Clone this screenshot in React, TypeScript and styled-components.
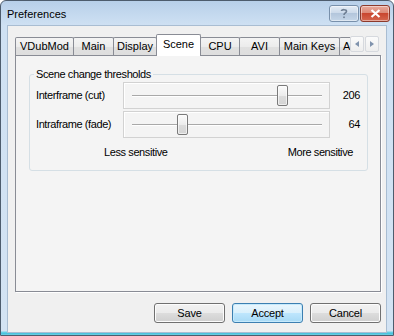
import React from 'react';
import styled, { createGlobalStyle } from 'styled-components';

const GlobalStyle = createGlobalStyle`
  html, body { margin: 0; padding: 0; background: #ffffff; }
  body {
    font-family: "Liberation Sans", Arial, sans-serif;
    font-size: 11px;
    color: #000;
  }
  * { box-sizing: border-box; }
`;

const Window = styled.div`
  width: 394px;
  height: 336px;
  display: flex;
  flex-direction: column;
  border: 1px solid #4d5c6d;
  border-radius: 6px 6px 0 0;
  padding: 0 7px 3px 7px;
  overflow: hidden;
  background: linear-gradient(
    to bottom,
    #b7cfe9 0px,
    #c3d8ee 12px,
    #cfe1f3 25px,
    #d3e3f3 calc(100% - 4px),
    #6fd3e6 calc(100% - 3px),
    #3fbfdb calc(100% - 1px),
    #8ed7e6 100%
  );
`;

const TitleBar = styled.div`
  height: 25px;
  margin: 0 -7px;
  padding: 0 3px 0 6px;
  display: flex;
  align-items: flex-start;
  justify-content: space-between;
  flex: none;
`;

const Title = styled.span`
  margin-top: 7px;
  font-size: 11px;
  line-height: 13px;
  color: #000;
`;

const CaptionButtons = styled.div`
  display: flex;
  gap: 1px;
  margin-top: 4px;
`;

const CaptionButton = styled.div<{ $kind: 'help' | 'close' }>`
  width: 30px;
  height: 17px;
  border-radius: 3px;
  display: flex;
  align-items: center;
  justify-content: center;
  border: 1px solid ${(p) => (p.$kind === 'close' ? '#8d3a2c' : '#7890ab')};
  background: ${(p) =>
    p.$kind === 'close'
      ? 'linear-gradient(to bottom, #e9a99b 0%, #dc8a78 45%, #c9462f 50%, #d5674f 100%)'
      : 'linear-gradient(to bottom, #e4ecf5 0%, #ccdaea 45%, #b3c6dc 50%, #c5d6e8 100%)'};
  box-shadow: inset 0 0 0 1px rgba(255, 255, 255, 0.45);
`;

const Client = styled.div`
  flex: 1;
  display: flex;
  flex-direction: column;
  background: #f0f0f0;
  padding: 8px 5px 9px 7px;
  box-shadow: 0 0 0 1px #a9bdd2;
`;

const TabStrip = styled.div`
  height: 22px;
  display: flex;
  position: relative;
  z-index: 1;
  flex: none;
`;

const TabsViewport = styled.div`
  width: 335px;
  height: 22px;
  display: flex;
  align-items: flex-end;
  overflow: hidden;
  flex: none;
`;

const Tab = styled.div<{ $w: number; $active?: boolean; $partial?: boolean }>`
  flex: none;
  width: ${(p) => p.$w}px;
  height: ${(p) => (p.$active ? 22 : 18)}px;
  margin-bottom: ${(p) => (p.$active ? 0 : 1)}px;
  margin-left: -1px;
  &:first-child { margin-left: 0; }
  border: 1px solid #898c95;
  border-bottom: none;
  border-radius: 2px 2px 0 0;
  display: flex;
  align-items: ${(p) => (p.$active ? 'flex-start' : 'center')};
  padding-top: ${(p) => (p.$active ? 3 : 0)}px;
  padding-left: ${(p) => (p.$partial ? 3 : 0)}px;
  justify-content: ${(p) => (p.$partial ? 'flex-start' : 'center')};
  white-space: nowrap;
  position: relative;
  z-index: ${(p) => (p.$active ? 2 : 1)};
  background: ${(p) =>
    p.$active
      ? '#ffffff'
      : 'linear-gradient(to bottom, #f4f4f4 0%, #ececec 50%, #e0e0e0 51%, #dedede 100%)'};
  font-size: 11px;
  line-height: 13px;
`;

const Spin = styled.div`
  display: flex;
  gap: 1px;
  margin-top: 2px;
  height: 16px;
`;

const SpinButton = styled.div`
  width: 14px;
  height: 16px;
  border: 1px solid #d6d9de;
  border-radius: 2px;
  background: linear-gradient(to bottom, #fbfbfb, #eeeeee);
  display: flex;
  align-items: center;
  justify-content: center;
`;

const Panel = styled.div`
  height: 237px;
  margin-top: -1px;
  border: 1px solid #898c95;
  background: #f4f4f4;
  box-shadow: 1px 1px 0 #ffffff;
  padding: 18px 0 0 13px;
  flex: none;
`;

const Group = styled.div`
  position: relative;
  width: 339px;
  height: 97px;
  border: 1px solid #d5dfe5;
  border-radius: 3px;
  padding: 7px 7px 0 6px;
  letter-spacing: -0.4px;
`;

const Legend = styled.span`
  position: absolute;
  top: -7px;
  left: 4px;
  padding: 0 2px;
  background: #f4f4f4;
  line-height: 13px;
  color: #000;
`;

const Grid = styled.div`
  display: grid;
  grid-template-columns: 87px 207px 1fr;
  grid-auto-rows: 27px;
  row-gap: 2px;
  align-items: center;
`;

const Label = styled.span`
  line-height: 13px;
  white-space: nowrap;
`;

const Value = styled.span`
  text-align: right;
  line-height: 13px;
`;

const SliderFrame = styled.div`
  height: 27px;
  border: 1px solid #d2d2d2;
  box-shadow: inset 1px 1px 0 #ffffff;
  display: flex;
  align-items: center;
  padding-left: 8px;
`;

const Track = styled.div`
  position: relative;
  width: 190px;
  height: 2px;
  border-top: 1px solid #a9a9a9;
  border-bottom: 1px solid #ffffff;
`;

const Thumb = styled.div`
  position: absolute;
  top: -11px;
  width: 11px;
  height: 21px;
  border: 1px solid #7a7a7a;
  border-radius: 2px;
  background: linear-gradient(to bottom, #fbfbfb 0%, #ececec 50%, #dcdcdc 51%, #d4d4d4 100%);
  box-shadow: inset 0 0 0 1px rgba(255, 255, 255, 0.6);
`;

const Sensitivity = styled.div`
  display: flex;
  justify-content: space-between;
  margin: 8px 7px 0 68px;
  line-height: 13px;
`;

const ButtonRow = styled.div`
  display: flex;
  justify-content: flex-end;
  gap: 7px;
  margin-top: 11px;
`;

const Button = styled.div<{ $default?: boolean }>`
  width: 71px;
  height: 20px;
  border-radius: 3px;
  display: flex;
  align-items: center;
  justify-content: center;
  font-size: 11px;
  letter-spacing: -0.2px;
  border: 1px solid ${(p) => (p.$default ? '#3c7fb1' : '#707070')};
  background: ${(p) =>
    p.$default
      ? 'linear-gradient(to bottom, #eaf6fd 0%, #d9f0fc 50%, #bee6fd 51%, #a7d9f5 100%)'
      : 'linear-gradient(to bottom, #f2f2f2 0%, #ebebeb 50%, #dddddd 51%, #cfcfcf 100%)'};
  box-shadow: inset 0 0 0 1px ${(p) => (p.$default ? '#c6eafc' : '#fcfcfc')};
`;

const tabs: { label: string; w: number; active?: boolean; partial?: boolean }[] = [
  { label: 'VDubMod', w: 59 },
  { label: 'Main', w: 41 },
  { label: 'Display', w: 44 },
  { label: 'Scene', w: 45, active: true },
  { label: 'CPU', w: 40 },
  { label: 'AVI', w: 41 },
  { label: 'Main Keys', w: 61 },
  { label: 'A', w: 30, partial: true },
];

const sliders = [
  { label: 'Interframe (cut)', value: 206 },
  { label: 'Intraframe (fade)', value: 64 },
];

const Slider = ({ value }: { value: number }) => (
  <SliderFrame>
    <Track>
      <Thumb style={{ left: `${Math.round((value / 255) * 180)}px` }} />
    </Track>
  </SliderFrame>
);

export default function App() {
  return (
    <>
      <GlobalStyle />
      <Window>
        <TitleBar>
          <Title>Preferences</Title>
          <CaptionButtons>
            <CaptionButton $kind="help">
              <svg width="8" height="11" viewBox="0 0 8 11">
                <path
                  d="M1.5 3 C1.5 1.2 6.5 1.2 6.5 3.2 C6.5 4.8 4 5 4 7"
                  fill="none"
                  stroke="#6f7f93"
                  strokeWidth="1.6"
                />
                <rect x="3.2" y="8.5" width="1.6" height="1.6" fill="#6f7f93" />
              </svg>
            </CaptionButton>
            <CaptionButton $kind="close">
              <svg width="11" height="9" viewBox="0 0 11 9">
                <path d="M1.5 1 L9.5 8 M9.5 1 L1.5 8" stroke="#ffffff" strokeWidth="2.2" />
              </svg>
            </CaptionButton>
          </CaptionButtons>
        </TitleBar>
        <Client>
          <TabStrip>
            <TabsViewport>
              {tabs.map((t) => (
                <Tab key={t.label} $w={t.w} $active={t.active} $partial={t.partial}>
                  {t.label}
                </Tab>
              ))}
            </TabsViewport>
            <Spin>
              <SpinButton>
                <svg width="4" height="6" viewBox="0 0 4 6">
                  <path d="M4 0 L0 3 L4 6 Z" fill="#8093ad" />
                </svg>
              </SpinButton>
              <SpinButton>
                <svg width="4" height="6" viewBox="0 0 4 6">
                  <path d="M0 0 L4 3 L0 6 Z" fill="#8093ad" />
                </svg>
              </SpinButton>
            </Spin>
          </TabStrip>
          <Panel>
            <Group>
              <Legend>Scene change thresholds</Legend>
              <Grid>
                {sliders.map((s) => (
                  <React.Fragment key={s.label}>
                    <Label>{s.label}</Label>
                    <Slider value={s.value} />
                    <Value>{s.value}</Value>
                  </React.Fragment>
                ))}
              </Grid>
              <Sensitivity>
                <span>Less sensitive</span>
                <span>More sensitive</span>
              </Sensitivity>
            </Group>
          </Panel>
          <ButtonRow>
            <Button>Save</Button>
            <Button $default>Accept</Button>
            <Button>Cancel</Button>
          </ButtonRow>
        </Client>
      </Window>
    </>
  );
}
